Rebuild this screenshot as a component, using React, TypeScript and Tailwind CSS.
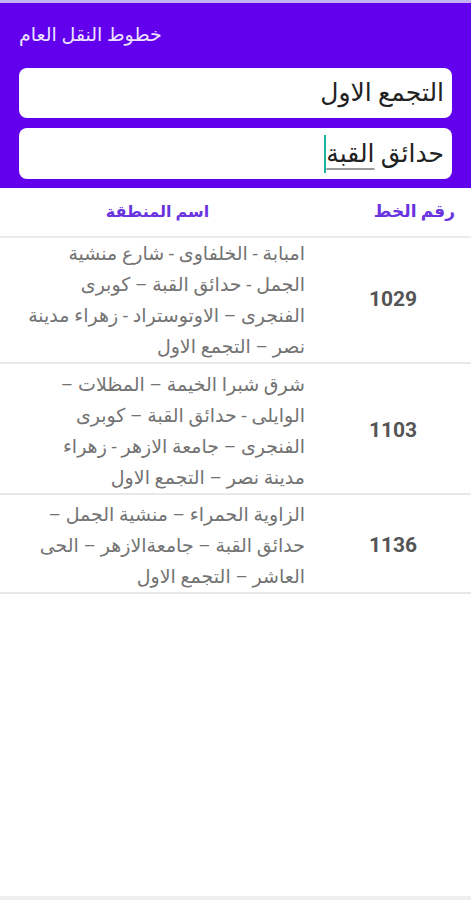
const routes = [
  {
    id: "1029",
    lines: [
      "امبابة - الخلفاوى - شارع منشية",
      "الجمل - حدائق القبة – كوبرى",
      "الفنجرى – الاوتوستراد - زهراء مدينة",
      "نصر – التجمع الاول",
    ],
    pad: "pt-0",
  },
  {
    id: "1103",
    lines: [
      "شرق شبرا الخيمة – المظلات –",
      "الوايلى - حدائق القبة – كوبرى",
      "الفنجرى – جامعة الازهر - زهراء",
      "مدينة نصر – التجمع الاول",
    ],
    pad: "pt-[5px]",
  },
  {
    id: "1136",
    lines: [
      "الزاوية الحمراء – منشية الجمل –",
      "حدائق القبة – جامعةالازهر – الحى",
      "العاشر – التجمع الاول",
    ],
    pad: "pt-[4px]",
  },
];

export default function App() {
  return (
    <div className="w-[471px] h-[900px] bg-white flex flex-col font-['Roboto','DejaVu_Sans',sans-serif]">
      <div className="h-[3px] bg-[#c3b0f6]" />
      <div className="bg-[#6200ee] px-[19px] pb-[9px]">
        <div className="h-[65px] flex items-center">
          <span className="text-[19px] text-[#ece3ff] font-medium">خطوط النقل العام</span>
        </div>
        <div dir="rtl" className="h-[50px] bg-white rounded-[8px] flex items-center px-[8px]">
          <span className="text-[25px] text-[#222]">التجمع الاول</span>
        </div>
        <div dir="rtl" className="h-[51px] mt-[10px] bg-white rounded-[8px] flex items-center px-[8px]">
          <span className="text-[25px] text-[#222]">
            حدائق <span className="underline decoration-[#999] underline-offset-[6px]">القبة</span>
          </span>
          <span className="inline-block w-[2px] h-[38px] bg-[#1db3a3]" />
        </div>
      </div>

      <div dir="rtl" className="flex h-[50px] border-b-2 border-[#ececec] items-center">
        <div className="w-[156px] pr-[16px] text-right text-[17px] font-semibold text-[#6a34e0]">رقم الخط</div>
        <div className="flex-1 text-center text-[16px] font-semibold text-[#6a34e0]">اسم المنطقة</div>
      </div>

      {routes.map((r) => (
        <div key={r.id} dir="rtl" className={`flex border-b-2 border-[#e8e8e8] ${r.pad}`}>
          <div className="w-[156px] flex items-center justify-center text-[21px] font-bold text-[#555]">
            {r.id}
          </div>
          <div className="flex-1 pr-[10px] text-[19px] leading-[31px] text-[#737373] whitespace-nowrap">
            {r.lines.map((l, i) => (
              <div key={i}>{l}</div>
            ))}
          </div>
        </div>
      ))}

      <div className="flex-1" />
      <div className="h-[4px] bg-[#efefef]" />
    </div>
  );
}
